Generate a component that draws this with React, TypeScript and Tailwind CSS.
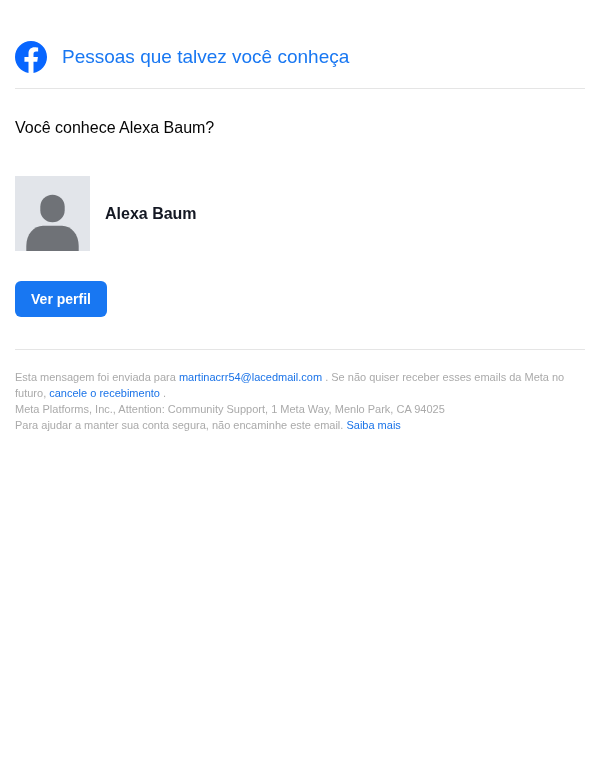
export default function App() {
  return (
    <div className="min-h-[768px] bg-white font-['Liberation_Sans',Arial,sans-serif]">
      <div className="px-[15px] pt-[25px] will-change-transform">
        {/* Header */}
        <div className="flex items-center gap-[15px] h-[64px] border-b border-[#e5e5e5]">
          <svg width="32" height="32" viewBox="0 0 24 24" className="shrink-0">
            <path
              fill="#0866ff"
              d="M24 12.073C24 5.405 18.627 0 12 0S0 5.405 0 12.073C0 18.1 4.388 23.094 10.125 24v-8.437H7.078v-3.49h3.047V9.413c0-3.026 1.792-4.697 4.533-4.697 1.312 0 2.686.236 2.686.236v2.97h-1.513c-1.491 0-1.956.93-1.956 1.874v2.25h3.328l-.532 3.49h-2.796V24C19.612 23.094 24 18.100 24 12.073z"
            />
          </svg>
          <span className="text-[19px] leading-[24px] pt-[1px] text-[#1877f2]">Pessoas que talvez você conheça</span>
        </div>

        <p className="mt-[29px] text-[16px] leading-[20px] text-[#050505]">Você conhece Alexa Baum?</p>

        {/* Profile */}
        <div className="mt-[38px] flex items-center gap-[15px]">
          <div className="w-[75px] h-[75px] bg-[#e2e5ea] overflow-hidden shrink-0">
            <svg width="75" height="75" viewBox="0 0 75 75">
              <rect x="25.300" y="18.700" width="24.400" height="27.600" rx="12.200" ry="12" fill="#6f7277" />
              <path d="M11.300 75V70C11.300 58 19 49.700 28 49.700H47C56 49.700 63.700 58 63.700 70V75Z" fill="#6f7277" />
            </svg>
          </div>
          <span className="text-[16px] font-bold text-[#141823]">Alexa Baum</span>
        </div>

        <div className="mt-[30px] flex">
          <a className="flex items-center justify-center w-[92px] h-[36px] rounded-md bg-[#1877f2] text-[14px] font-bold text-white">
            Ver perfil
          </a>
        </div>

        {/* Footer */}
        <div className="mt-[32px] border-t border-[#e5e5e5] pt-[19px] text-[11px] leading-[16px] text-[#aaaaaa]">
          <p>
            Esta mensagem foi enviada para <span className="text-[#1a73e8]">martinacrr54@lacedmail.com</span> . Se não quiser receber esses emails da Meta no futuro, <span className="text-[#1a73e8]">cancele o recebimento</span> .
          </p>
          <p>Meta Platforms, Inc., Attention: Community Support, 1 Meta Way, Menlo Park, CA 94025</p>
          <p>
            Para ajudar a manter sua conta segura, não encaminhe este email. <span className="text-[#1a73e8]">Saiba mais</span>
          </p>
        </div>
      </div>
    </div>
  );
}
